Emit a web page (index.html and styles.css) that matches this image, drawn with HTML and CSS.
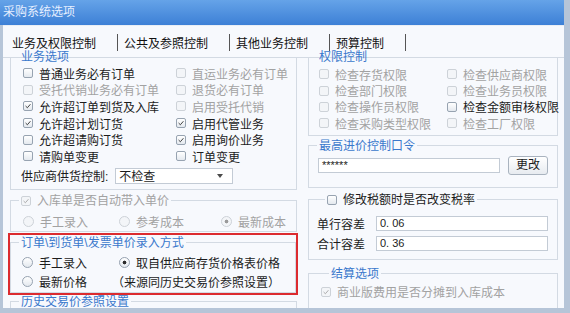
FILE: index.html
```html
<!DOCTYPE html>
<html lang="zh-CN">
<head>
    <meta charset="UTF-8">
    <title>采购系统选项</title>
    <link rel="stylesheet" href="styles.css">
</head>
<body>
<div class="window">
    <div class="titlebar">采购系统选项</div>
    <div class="client">
        <!-- 选项卡 -->
        <div class="tabs">
            <span class="tab active">业务及权限控制</span><span class="sep"></span>
            <span class="tab">公共及参照控制</span><span class="sep"></span>
            <span class="tab">其他业务控制</span><span class="sep"></span>
            <span class="tab">预算控制</span><span class="sep"></span>
        </div>

        <div class="panel">
            <div class="col left">
                <fieldset class="g-biz">
                    <legend>业务选项</legend>
                    <div class="grid biz">
                        <label class="opt"><span class="cb"></span>普通业务必有订单</label>
                        <label class="opt off"><span class="cb"></span>直运业务必有订单</label>
                        <label class="opt off"><span class="cb"></span>受托代销业务必有订单</label>
                        <label class="opt off"><span class="cb"></span>退货必有订单</label>
                        <label class="opt"><span class="cb"><svg viewBox="0 0 10 10"><polyline points="2,5 4.2,7.2 8,2.8"/></svg></span>允许超订单到货及入库</label>
                        <label class="opt off"><span class="cb"></span>启用受托代销</label>
                        <label class="opt"><span class="cb"><svg viewBox="0 0 10 10"><polyline points="2,5 4.2,7.2 8,2.8"/></svg></span>允许超计划订货</label>
                        <label class="opt"><span class="cb"><svg viewBox="0 0 10 10"><polyline points="2,5 4.2,7.2 8,2.8"/></svg></span>启用代管业务</label>
                        <label class="opt"><span class="cb"></span>允许超请购订货</label>
                        <label class="opt"><span class="cb"><svg viewBox="0 0 10 10"><polyline points="2,5 4.2,7.2 8,2.8"/></svg></span>启用询价业务</label>
                        <label class="opt"><span class="cb"></span>请购单变更</label>
                        <label class="opt"><span class="cb"></span>订单变更</label>
                    </div>
                    <div class="supply">
                        <span>供应商供货控制:</span>
                        <div class="select"><span>不检查</span><i class="arrow"></i></div>
                    </div>
                </fieldset>

                <fieldset class="g-price">
                    <legend class="off"><span class="cb"><svg viewBox="0 0 10 10"><polyline points="2,5 4.2,7.2 8,2.8"/></svg></span>入库单是否自动带入单价</legend>
                    <div class="radios">
                        <label class="opt off"><span class="rd"></span>手工录入</label>
                        <label class="opt off"><span class="rd"></span>参考成本</label>
                        <label class="opt off"><span class="rd on"></span>最新成本</label>
                    </div>
                </fieldset>

                <!-- 红框标注 -->
                <div class="mark">
                    <fieldset class="g-entry">
                        <legend>订单\到货单\发票单价录入方式</legend>
                        <div class="entry">
                            <label class="opt"><span class="rd"></span>手工录入</label>
                            <label class="opt"><span class="rd on"></span>取自供应商存货价格表价格</label>
                            <label class="opt"><span class="rd"></span>最新价格</label>
                            <span class="note">（来源同历史交易价参照设置）</span>
                        </div>
                    </fieldset>
                </div>

                <fieldset class="g-hist">
                    <legend>历史交易价参照设置</legend>
                </fieldset>
            </div>

            <div class="col right">
                <fieldset class="g-auth">
                    <legend>权限控制</legend>
                    <div class="grid auth">
                        <label class="opt off"><span class="cb"></span>检查存货权限</label>
                        <label class="opt off"><span class="cb"></span>检查供应商权限</label>
                        <label class="opt off"><span class="cb"></span>检查部门权限</label>
                        <label class="opt off"><span class="cb"></span>检查业务员权限</label>
                        <label class="opt off"><span class="cb"></span>检查操作员权限</label>
                        <label class="opt"><span class="cb"></span>检查金额审核权限</label>
                        <label class="opt off"><span class="cb"></span>检查采购类型权限</label>
                        <label class="opt off"><span class="cb"></span>检查工厂权限</label>
                    </div>
                </fieldset>

                <fieldset class="g-pwd">
                    <legend>最高进价控制口令</legend>
                    <div class="pwd">
                        <div class="input">******</div>
                        <div class="button">更改</div>
                    </div>
                </fieldset>

                <fieldset class="g-tax">
                    <legend class="dark"><span class="cb"></span>修改税额时是否改变税率</legend>
                    <div class="field"><span class="lbl">单行容差</span><div class="input">0. 06</div></div>
                    <div class="field"><span class="lbl">合计容差</span><div class="input">0. 36</div></div>
                </fieldset>

                <fieldset class="g-settle">
                    <legend>结算选项</legend>
                    <label class="opt off"><span class="cb"><svg viewBox="0 0 10 10"><polyline points="2,5 4.2,7.2 8,2.8"/></svg></span>商业版费用是否分摊到入库成本</label>
                </fieldset>
            </div>
        </div>
    </div>
</div>
</body>
</html>
```

FILE: styles.css
```css
body {
    margin: 0;
    font-family: "Liberation Sans", "Noto Sans CJK SC", sans-serif;
    font-size: 12px;
    color: #1c1c1c;
}

.window {
    width: 570px;
    height: 313px;
    box-sizing: border-box;
    display: flex;
    flex-direction: column;
    background: #b6c5d8;
    padding: 0 6px 5px 0;
    overflow: hidden;
}
.titlebar {
    height: 25px;
    line-height: 25px;
    padding-left: 3px;
    color: #e6efff;
    background: linear-gradient(#65a3e8, #3d80d6);
    flex-shrink: 0;
}
.client {
    flex: 1;
    margin-left: 3px;
    background: #f7f9fd;
    overflow: hidden;
}

/* 选项卡 */
.tabs {
    height: 33px;
    display: flex;
    align-items: center;
    padding: 1px 0 0 9px;
    box-sizing: border-box;
    border-bottom: 1px solid #d3dae3;
    border-top: 1px solid #e9eef5;
}
.tab {
    padding-right: 21px;
    color: #111111;
    font-size: 12px;
}
.tabs .sep {
    width: 1px;
    height: 17px;
    background: #555555;
    margin-right: 6px;
}

.panel {
    display: flex;
    gap: 10px;
    padding: 0 6px 0 5px;
    margin-top: -8px;
}
.col {
    display: flex;
    flex-direction: column;
}
.col.left {
    width: 290px;
}
.col.right {
    width: 250px;
}

fieldset {
    margin: 0;
    padding: 0;
    border: 1px solid #d3dae3;
    min-width: 0;
}
legend {
    margin-left: 8px;
    padding: 0 2px;
    height: 14px;
    line-height: 14px;
    color: #3a78cc;
}
legend.off {
    color: #a2a2a2;
}
legend.dark {
    color: #1c1c1c;
}
legend .cb {
    display: inline-block;
    vertical-align: -1px;
    margin-right: 6px;
}

.col.left fieldset {
    margin-left: 2px;
    margin-right: 1px;
}

/* 复选框 */
.cb {
    width: 10px;
    height: 10px;
    box-sizing: border-box;
    border: 1px solid #97a3b1;
    border-radius: 2px;
    background: linear-gradient(#ffffff, #e4e9ef);
    flex-shrink: 0;
}
.cb svg {
    display: block;
    width: 8px;
    height: 8px;
}
.cb polyline {
    fill: none;
    stroke: #3a3a3a;
    stroke-width: 1.2;
}
.off .cb {
    border-color: #cdd2d8;
    background: #f3f5f8;
}
.off .cb polyline {
    stroke: #a8a8a8;
}

/* 单选框 */
.rd {
    width: 11px;
    height: 11px;
    box-sizing: border-box;
    border: 1px solid #96a2b0;
    border-radius: 50%;
    background: linear-gradient(#ffffff, #e3e8ee);
    flex-shrink: 0;
}
.rd.on {
    background: radial-gradient(circle, #2c2c2c 0 1.6px, transparent 2.2px), linear-gradient(#ffffff, #e3e8ee);
}
.off .rd {
    border-color: #cdd2d8;
    background: #f3f5f8;
}
.off .rd.on {
    background: radial-gradient(circle, #9a9a9a 0 1.6px, transparent 2.2px), #f3f5f8;
}

.opt {
    display: flex;
    align-items: center;
    gap: 6px;
    white-space: nowrap;
}
.opt.off {
    color: #a2a2a2;
}

.grid {
    display: grid;
}
.grid.biz {
    grid-template-columns: 153px 1fr;
    grid-auto-rows: 16.6px;
    padding: 1px 0 0 12px;
}
.grid.auth {
    grid-template-columns: 128px 1fr;
    grid-auto-rows: 16.4px;
    padding: 2px 0 3px 10px;
}

.supply {
    display: flex;
    align-items: center;
    gap: 7px;
    margin: 3px 0 5px 10px;
    height: 16px;
}
.select {
    width: 118px;
    height: 16px;
    box-sizing: border-box;
    border: 1px solid #c3cbd5;
    background: #ffffff;
    display: flex;
    align-items: center;
    justify-content: space-between;
    padding: 0 9px 0 3px;
}
.arrow {
    border-left: 3px solid transparent;
    border-right: 3px solid transparent;
    border-top: 4px solid #4a4a4a;
}

.g-price {
    margin-top: 4px;
}
.radios {
    display: flex;
    height: 16px;
    padding: 6px 0 1px 12px;
}
.radios .opt:nth-child(1) {
    width: 96px;
}
.radios .opt:nth-child(2) {
    width: 102px;
}

.mark {
    margin-top: 1px;
    border: 2px solid #dc2b2f;
}
.col.left .mark fieldset {
    margin: 1px 0 0 0;
}
.entry {
    display: grid;
    grid-template-columns: 97px 1fr;
    grid-auto-rows: 16px;
    row-gap: 3px;
    padding: 5px 0 2px 11px;
}
.entry .note {
    align-self: center;
    margin-left: -7px;
    white-space: nowrap;
}

.g-hist {
    height: 20px;
}

/* 右侧 */
.g-pwd {
    margin-top: 3px;
}
.pwd {
    display: flex;
    align-items: center;
    gap: 8px;
    padding: 3px 0 12px 9px;
}
.input {
    height: 15px;
    box-sizing: border-box;
    border: 1px solid #c3cbd5;
    background: #ffffff;
    font-size: 11px;
    line-height: 13px;
    padding-left: 3px;
    color: #222222;
}
.pwd .input {
    width: 182px;
}
.button {
    width: 40px;
    height: 19px;
    box-sizing: border-box;
    border: 1px solid #a9b3bf;
    border-radius: 3px;
    background: linear-gradient(#ffffff, #e7ebf0);
    text-align: center;
    line-height: 17px;
}

.g-tax {
    margin-top: 5px;
    padding: 9px 0 8px 8px;
}
.field {
    display: flex;
    align-items: center;
    height: 15px;
}
.field + .field {
    margin-top: 5px;
}
.field .lbl {
    width: 59px;
}
.field .input {
    width: 172px;
}

.g-settle {
    margin-top: 7px;
    padding: 3px 0 10px 12px;
}
.g-settle .opt {
    height: 16px;
}
```
